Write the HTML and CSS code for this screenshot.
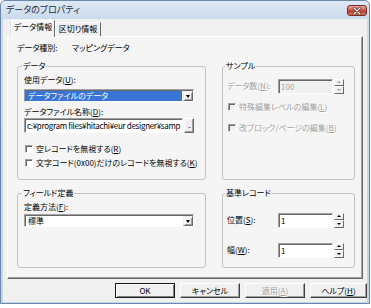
FILE: index.html
```html
<!DOCTYPE html>
<html lang="ja">
<head>
  <meta charset="UTF-8">
  <title>データのプロパティ</title>
  <link rel="stylesheet" href="styles.css">
</head>
<body>

  <div class="window">

    <!-- Title bar -->
    <div class="titlebar">
      <span class="title">データのプロパティ</span>
      <span class="close">
        <svg width="10" height="8" viewBox="0 0 10 8">
          <path d="M2 1 L8 7 M8 1 L2 7" stroke="#5a1a12" stroke-width="2.6" stroke-linecap="round"/>
          <path d="M2 1 L8 7 M8 1 L2 7" stroke="#fff" stroke-width="1.4" stroke-linecap="round"/>
        </svg>
      </span>
    </div>

    <div class="client">

      <!-- Tabs -->
      <div class="tabs">
        <div class="tab tab-active">データ情報</div>
        <div class="tab">区切り情報</div>
      </div>

      <div class="panel">
        <div class="kind">
          <span class="kind-label">データ種別:</span>
          <span>マッピングデータ</span>
        </div>

        <div class="groups">

          <fieldset class="group group-left">
            <legend>データ</legend>
            <div class="label">使用データ(<u>U</u>):</div>
            <div class="combo combo-data">
              <span class="combo-text selected">データファイルのデータ</span>
              <span class="combo-btn"></span>
            </div>
            <div class="label label-file">データファイル名称(<u>D</u>):</div>
            <div class="file-row">
              <div class="field field-file">c:¥program files¥hitachi¥eur designer¥samp</div>
              <div class="browse">...</div>
            </div>
            <div class="check-row check-first">
              <span class="check"></span>
              <span>空レコードを無視する(<u>R</u>)</span>
            </div>
            <div class="check-row check-second">
              <span class="check"></span>
              <span>文字コード(0x00)だけのレコードを無視する(<u>K</u>)</span>
            </div>
          </fieldset>

          <fieldset class="group group-right">
            <legend>サンプル</legend>
            <div class="spin-row spin-sample disabled">
              <span class="spin-label">データ数(<u>N</u>):</span>
              <span class="field spin-input">100</span>
              <span class="spinner">
                <span class="spin-btn spin-up"></span>
                <span class="spin-btn spin-down"></span>
              </span>
            </div>
            <div class="check-row check-sample1 disabled">
              <span class="check"></span>
              <span>特殊編集レベルの編集(<u>L</u>)</span>
            </div>
            <div class="check-row check-sample2 disabled">
              <span class="check"></span>
              <span>改ブロック/ページの編集(<u>B</u>)</span>
            </div>
          </fieldset>

          <fieldset class="group group-left">
            <legend>フィールド定義</legend>
            <div class="label">定義方法(<u>F</u>):</div>
            <div class="combo combo-method">
              <span class="combo-text">標準</span>
              <span class="combo-btn"></span>
            </div>
          </fieldset>

          <fieldset class="group group-right">
            <legend>基準レコード</legend>
            <div class="spin-row spin-pos">
              <span class="spin-label">位置(<u>S</u>):</span>
              <span class="field spin-input">1</span>
              <span class="spinner">
                <span class="spin-btn spin-up"></span>
                <span class="spin-btn spin-down"></span>
              </span>
            </div>
            <div class="spin-row spin-width">
              <span class="spin-label">幅(<u>W</u>):</span>
              <span class="field spin-input">1</span>
              <span class="spinner">
                <span class="spin-btn spin-up"></span>
                <span class="spin-btn spin-down"></span>
              </span>
            </div>
          </fieldset>

        </div>
      </div>

      <!-- Dialog buttons -->
      <div class="buttons">
        <div class="btn btn-default">OK</div>
        <div class="btn">キャンセル</div>
        <div class="btn disabled">適用(<u>A</u>)</div>
        <div class="btn btn-help">ヘルプ(<u>H</u>)</div>
      </div>

    </div>
  </div>

</body>
</html>
```

FILE: styles.css
```css
/* Basic Reset */
* {
  box-sizing: border-box;
}

body {
  margin: 0;
  background-color: #ffffff;
  font-family: "Noto Sans CJK JP", sans-serif;
  font-size: 8px;
  font-feature-settings: "palt";
  line-height: 12px;
  color: #000000;
}

u {
  text-underline-offset: 1px;
}

/* Window frame */
.window {
  width: 370px;
  height: 304px;
  border: 1px solid #6a87ad;
  border-radius: 5px 5px 0 0;
  background: linear-gradient(#dfe9f5, #cbdaed 18px, #c3d5ea);
  padding: 0 2px 1px 2px;
  display: flex;
  flex-direction: column;
}

.titlebar {
  height: 18px;
  display: flex;
  align-items: center;
  justify-content: space-between;
  padding-left: 3px;
}

.title {
  font-size: 9px;
  color: #1e2a3a;
}

.close {
  width: 20px;
  height: 11px;
  margin-top: 1px;
  border: 1px solid #7a2a22;
  border-radius: 3px;
  background: linear-gradient(#eba99c, #d0604f 45%, #b83a2b 55%, #d27a66);
  display: flex;
  align-items: center;
  justify-content: center;
}

.client {
  flex: 1;
  background-color: #f0f0f0;
  padding: 1px 0 0 4px;
  display: flex;
  flex-direction: column;
}

/* Tabs */
.tabs {
  display: flex;
  align-items: flex-end;
  height: 16px;
  margin-left: 4px;
}

.tab {
  width: 46px;
  height: 14px;
  background-color: #f0f0f0;
  border: 1px solid;
  border-color: #ffffff #696969 transparent #ffffff;
  border-bottom: none;
  text-align: center;
  line-height: 12px;
}

.tab-active {
  position: relative;
  width: 44px;
  height: 17px;
  margin-bottom: -1px;
  background-color: #f5f5f5;
  box-shadow: -1px 0 0 #e3e3e3;
}

/* Tab page */
.panel {
  width: 356px;
  height: 243px;
  background-color: #f5f5f5;
  border: 1px solid;
  border-color: #ffffff #696969 #696969 #ffffff;
  box-shadow: inset -1px -1px 0 #a0a0a0;
}

.kind {
  display: flex;
  margin: 5px 0 0 9px;
  height: 12px;
}

.kind-label {
  width: 55px;
}

.groups {
  display: grid;
  grid-template-columns: 189px 133px;
  grid-template-rows: 120px 81px;
  column-gap: 16px;
  row-gap: 7px;
  margin: 6px 0 0 9px;
}

.group {
  margin: 0;
  min-width: 0;
  border: 1px solid #c3c3c3;
  border-radius: 3px;
}

.group-left {
  padding: 0 6px 0 6px;
}

.group-right {
  padding: 0 4px 0 4px;
}

.group legend {
  padding: 0 1px;
  margin-left: -2px;
  line-height: 12px;
}

.label {
  margin-top: 2px;
  height: 12px;
}

.label-file {
  margin-top: 4px;
}

/* Combo boxes */
.combo {
  display: flex;
  width: 170px;
  height: 13px;
  margin-top: 3px;
  background-color: #ffffff;
  border: 1px solid;
  border-color: #a0a0a0 #ffffff #ffffff #a0a0a0;
  box-shadow: inset 1px 1px 0 #696969;
  padding: 1px 0 0 1px;
}

.combo-method {
  margin-top: 1px;
}

.combo-text {
  flex: 1;
  padding-left: 2px;
  line-height: 10px;
  white-space: nowrap;
}

.combo-text.selected {
  background-color: #3875d7;
  color: #ffffff;
  margin: 0 1px 0 0;
}

.combo-btn {
  width: 10px;
  background-color: #f0f0f0;
  border: 1px solid;
  border-color: #f0f0f0 #696969 #696969 #f0f0f0;
  box-shadow: inset 1px 1px 0 #ffffff, inset -1px -1px 0 #a0a0a0;
  display: flex;
  align-items: center;
  justify-content: center;
}

.combo-btn::after {
  content: "";
  border-left: 2.5px solid transparent;
  border-right: 2.5px solid transparent;
  border-top: 3px solid #000000;
}

/* Edit fields */
.field {
  height: 15px;
  background-color: #ffffff;
  border: 1px solid;
  border-color: #a0a0a0 #ffffff #ffffff #a0a0a0;
  box-shadow: inset 1px 1px 0 #696969;
  padding: 1px 0 0 2px;
  line-height: 11px;
  overflow: hidden;
  white-space: nowrap;
}

.file-row {
  display: flex;
  gap: 1px;
  height: 15px;
}

.field-file {
  width: 159px;
  letter-spacing: -0.3px;
}

.browse {
  width: 10px;
  height: 15px;
  background-color: #f0f0f0;
  border: 1px solid;
  border-color: #ffffff #696969 #696969 #ffffff;
  box-shadow: inset -1px -1px 0 #a0a0a0;
  font-size: 6px;
  line-height: 14px;
  text-align: center;
  letter-spacing: -1px;
}

/* Check boxes */
.check-row {
  display: flex;
  align-items: center;
  gap: 3px;
  height: 12px;
  margin-left: 1px;
}

.check {
  width: 8px;
  height: 8px;
  background-color: #ffffff;
  border: 1px solid;
  border-color: #a0a0a0 #ffffff #ffffff #a0a0a0;
  box-shadow: inset 1px 1px 0 #696969;
}

.check-first {
  margin-top: 10px;
}

.check-second {
  margin-top: 2px;
}

.check-sample1 {
  margin-top: 7px;
}

.check-sample2 {
  margin-top: 9px;
}

/* Spin boxes */
.spin-row {
  display: flex;
  align-items: center;
  height: 16px;
}

.spin-sample {
  margin-top: 6px;
}

.spin-pos {
  margin-top: 13px;
}

.spin-width {
  margin-top: 14px;
}

.spin-label {
  width: 51px;
}

.spin-input {
  width: 55px;
}

.spinner {
  display: flex;
  flex-direction: column;
  width: 10px;
  height: 15px;
  margin-left: 1px;
}

.spin-btn {
  flex: 1;
  background-color: #f0f0f0;
  border: 1px solid;
  border-color: #ffffff #696969 #696969 #ffffff;
  display: flex;
  align-items: center;
  justify-content: center;
}

.spin-up::after {
  content: "";
  border-left: 2px solid transparent;
  border-right: 2px solid transparent;
  border-bottom: 2px solid #000000;
}

.spin-down::after {
  content: "";
  border-left: 2px solid transparent;
  border-right: 2px solid transparent;
  border-top: 2px solid #000000;
}

/* Disabled state */
.disabled {
  color: #a0a0a0;
  text-shadow: 1px 1px 0 #ffffff;
}

.disabled .field,
.disabled .check {
  background-color: #f0f0f0;
}

.disabled .spin-up::after {
  border-bottom-color: #a0a0a0;
}

.disabled .spin-down::after {
  border-top-color: #a0a0a0;
}

/* Dialog buttons */
.buttons {
  display: flex;
  justify-content: flex-end;
  gap: 5px;
  margin-top: 4px;
}

.btn {
  width: 60px;
  height: 15px;
  background-color: #f0f0f0;
  border: 1px solid;
  border-color: #ffffff #404040 #404040 #ffffff;
  box-shadow: inset -1px -1px 0 #a0a0a0;
  display: flex;
  align-items: center;
  justify-content: center;
}

.btn-default {
  border-color: #1a1a1a;
  box-shadow: inset 1px 1px 0 #ffffff, inset -1px -1px 0 #808080;
}

.btn-help {
  width: 57px;
}
```
